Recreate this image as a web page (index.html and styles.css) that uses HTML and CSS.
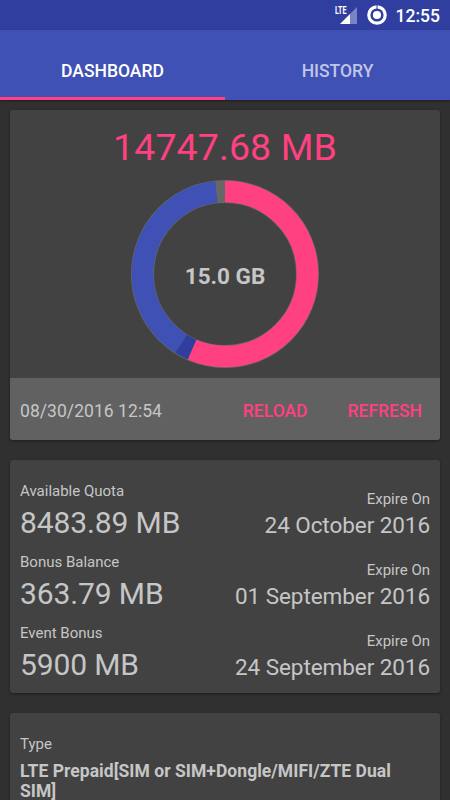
FILE: index.html
```html
<!DOCTYPE html>
<html lang="en">
<head>
<meta charset="utf-8">
<title>Dashboard</title>
<link rel="stylesheet" href="styles.css">
</head>
<body>
<div class="status">
  <svg class="signal" width="24" height="20" viewBox="0 0 24 20">
    <text class="lte" x="1" y="9" textLength="11.5" lengthAdjust="spacingAndGlyphs">LTE</text>
    <path d="M16 9L23 2V19H16Z" fill="#7a84c4"/>
    <path d="M16 9V19H6Z" fill="#fff"/>
  </svg>
  <svg class="ring-icon" width="20" height="20" viewBox="0 0 20 20">
    <circle cx="10" cy="10" r="8.2" fill="none" stroke="#fff" stroke-width="3.2"/>
    <circle cx="10" cy="10" r="4.1" fill="#fff"/>
    <path d="M10 0V4" stroke="#303f9f" stroke-width="1"/>
  </svg>
  <span class="clock">12:55</span>
</div>
<nav class="tabs">
  <div class="tab active">DASHBOARD</div>
  <div class="tab">HISTORY</div>
</nav>
<main class="content">
  <section class="card">
    <h1 class="total">14747.68 MB</h1>
    <svg class="donut" width="190" height="190" viewBox="-95 -95 190 190">
      <circle r="82.5" fill="none" stroke="#676767" stroke-width="23"/>
      <g transform="rotate(-90)" fill="none" stroke-width="21.6">
        <circle r="82.5" pathLength="15000" stroke="#ff4081" stroke-dasharray="8483.89 15000"/>
        <circle r="82.5" pathLength="15000" stroke="#303f9f" stroke-dasharray="363.79 15000" stroke-dashoffset="-8483.89"/>
        <circle r="82.5" pathLength="15000" stroke="#3f51b5" stroke-dasharray="5900 15000" stroke-dashoffset="-8847.68"/>
      </g>
      <text class="donut-label" x="0" y="10" text-anchor="middle">15.0 GB</text>
    </svg>
    <div class="footer">
      <span class="updated">08/30/2016 12:54</span>
      <span class="action reload">RELOAD</span>
      <span class="action">REFRESH</span>
    </div>
  </section>
  <section class="card quotas">
    <div class="row">
      <div><div class="label">Available Quota</div><div class="amount">8483.89 MB</div></div>
      <div class="expiry"><div class="label">Expire On</div><div class="date">24 October 2016</div></div>
    </div>
    <div class="row">
      <div><div class="label">Bonus Balance</div><div class="amount">363.79 MB</div></div>
      <div class="expiry"><div class="label">Expire On</div><div class="date">01 September 2016</div></div>
    </div>
    <div class="row">
      <div><div class="label">Event Bonus</div><div class="amount">5900 MB</div></div>
      <div class="expiry"><div class="label">Expire On</div><div class="date">24 September 2016</div></div>
    </div>
  </section>
  <section class="card plan">
    <div class="label">Type</div>
    <div class="plan-name">LTE Prepaid[SIM or SIM+Dongle/MIFI/ZTE Dual SIM]</div>
  </section>
</main>
</body>
</html>
```
FILE: styles.css
```css
* { box-sizing: border-box; }
body {
  margin: 0;
  height: 800px;
  overflow: hidden;
  background: #303030;
  color: #c6c6c6;
  font-family: Roboto, sans-serif;
}
.status {
  display: flex;
  align-items: center;
  justify-content: flex-end;
  height: 30px;
  padding-right: 10px;
  background: #303f9f;
  color: #fff;
}
.signal { margin: 4px 9px 4px 0; }
.lte { font: 700 10.5px Roboto, sans-serif; fill: #fff; }
.ring-icon { margin-right: 9px; }
.clock { font-size: 17.5px; font-weight: 500; line-height: 30px; padding-top: 1px; }
.tabs {
  display: flex;
  height: 70px;
  background: #3f51b5;
  box-shadow: 0 1px 2px rgba(0, 0, 0, .4);
}
.tab {
  flex: 1;
  padding-top: 12px;
  line-height: 58px;
  text-align: center;
  font-size: 17.5px;
  font-weight: 500;
  color: #c0c6e7;
}
.tab.active { color: #fff; box-shadow: inset 0 -3px #ff4081; }
.content {
  display: flex;
  flex-direction: column;
  gap: 20px;
  height: 700px;
  padding: 10px 10px 0;
}
.card {
  flex-shrink: 0;
  overflow: hidden;
  border-radius: 3px;
  background: #424242;
  box-shadow: 0 1px 3px rgba(0, 0, 0, .4);
}
.total {
  margin: 0;
  padding-top: 15px;
  height: 69px;
  font-size: 37.5px;
  font-weight: 400;
  line-height: 44px;
  text-align: center;
  letter-spacing: .1px;
  color: #ff4081;
}
.donut { display: block; margin: 0 auto 9px; }
.donut-label { font: 700 22.5px Roboto, sans-serif; fill: #c6c6c6; }
.footer {
  display: flex;
  align-items: center;
  height: 62px;
  padding: 4px 18px 0 10px;
  background: #616161;
  font-size: 17.5px;
}
.updated { letter-spacing: .06px; }
.action { font-weight: 500; color: #ff4081; }
.reload { margin: 0 40px 0 auto; }
.quotas { height: 233px; padding: 22px 10px 0; }
.row { display: flex; justify-content: space-between; height: 71px; }
.label { font-size: 15px; line-height: 19px; margin-bottom: -1px; }
.amount { font-size: 30px; line-height: 35px; margin-top: 5px; letter-spacing: -.12px; }
.expiry { padding-top: 8px; text-align: right; }
.date { font-size: 22.5px; line-height: 26px; margin-top: 4px; letter-spacing: -.07px; }
.plan { height: 87px; padding: 22px 10px 0; border-radius: 3px 3px 0 0; }
.plan-name {
  margin-top: 8px;
  padding-right: 20px;
  font-size: 17.5px;
  font-weight: 700;
  line-height: 20px;
  letter-spacing: .04px;
}
```
